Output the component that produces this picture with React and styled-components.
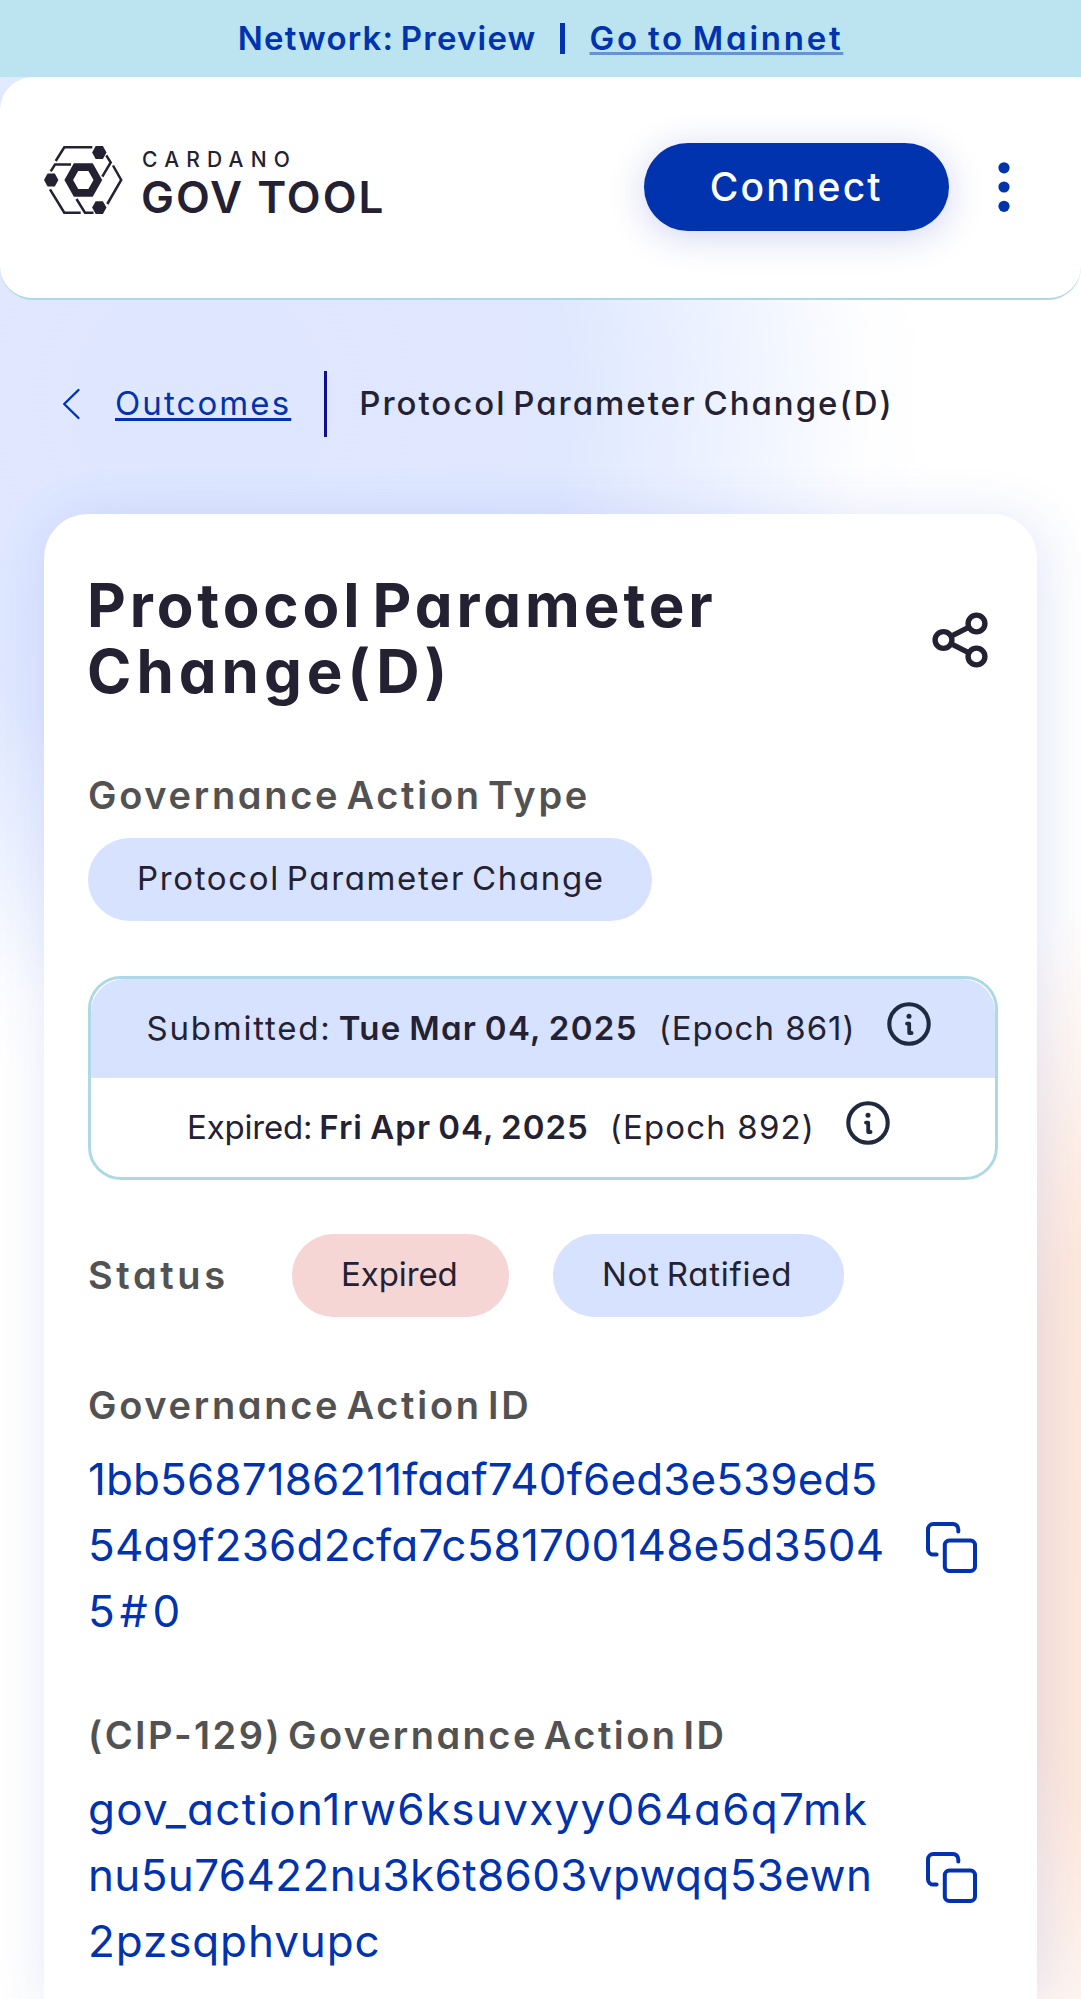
import React from "react";
import styled, { createGlobalStyle } from "styled-components";

const color = {
  primary: "#0033ad",
  ink: "#242232",
  label: "#525252",
  chip: "#d6e2ff",
  chipError: "#f6d5d5",
  border: "#add8e6",
};

const GlobalStyle = createGlobalStyle`
  *, *::before, *::after { box-sizing: border-box; }
  body {
    margin: 0;
    background: #fff;
    color: ${color.ink};
    font-family: Inter, "Open Sans", sans-serif;
    font-feature-settings: "cv11";
  }
`;

const Page = styled.div`
  display: flex;
  flex-direction: column;
  height: 1999px;
  overflow: hidden;
  background:
    radial-gradient(ellipse 300px 650px at 1160px 1530px, #ffe8db 0%, #ffe9dd 50%, rgba(255, 240, 230, 0.6) 78%, rgba(255, 255, 255, 0) 100%),
    radial-gradient(ellipse 740px 690px at 200px 400px, #dee7ff 0%, #dfe8ff 50%, rgba(232, 239, 255, 0.75) 72%, rgba(250, 251, 255, 0.4) 90%, rgba(255, 255, 255, 0) 100%),
    #fff;
`;

const Text = styled.span`
  white-space: pre;
  font-size: ${(p) => p.$size || 33}px;
  font-weight: ${(p) => p.$weight || 400};
  letter-spacing: ${(p) => p.$track || 0}px;
  word-spacing: ${(p) => p.$space || 0}px;
  line-height: 1.2;
`;

const Banner = styled.div`
  display: flex;
  flex: none;
  align-items: center;
  justify-content: center;
  height: 77px;
  background: #bbe4f0;
  color: ${color.primary};
`;

const BannerDivider = styled.span`
  width: 5px;
  height: 31px;
  margin: 0 25px 0 23px;
  background: ${color.primary};
`;

const MainnetLink = styled(Text)`
  text-decoration: underline;
  text-decoration-color: rgba(0, 51, 173, 0.45);
  text-decoration-thickness: 3px;
  text-underline-offset: 2px;
  text-decoration-skip-ink: none;
`;

const Header = styled.header`
  display: flex;
  flex: none;
  align-items: center;
  justify-content: space-between;
  height: 222.5px;
  padding: 0 71.5px 0 44px;
  background: #fff;
  border-bottom: 2.75px solid ${color.border};
  border-radius: 33px;
`;

const Logo = styled.div`
  display: flex;
  gap: 19px;
  height: 68px;
  margin-bottom: 14px;
`;

const LogoText = styled.div`
  display: flex;
  flex-direction: column;
`;

const LogoTop = styled(Text)`
  line-height: 28px;
`;

const LogoBottom = styled(Text)`
  line-height: 47px;
  margin-left: -1px;
`;

const Actions = styled.div`
  display: flex;
  align-items: center;
  gap: 48.5px;
`;

const ConnectButton = styled.button`
  width: 305.5px;
  height: 88px;
  padding: 0;
  border: 0;
  border-radius: 44px;
  background: ${color.primary};
  color: #fff;
  font-family: inherit;
  font-feature-settings: inherit;
  box-shadow: 0 6px 36px rgba(47, 62, 190, 0.22);
`;

const Icon = styled.svg`
  display: block;
  flex: none;
`;

const Breadcrumbs = styled.nav`
  display: flex;
  flex: none;
  align-items: center;
  height: 66.5px;
  margin: 71px 0 76.5px 61px;
`;

const BackLink = styled(Text)`
  margin-left: 34px;
  color: ${color.primary};
  text-decoration: underline;
  text-decoration-thickness: 2.75px;
  text-underline-offset: 2.5px;
  text-decoration-skip-ink: none;
`;

const CrumbDivider = styled.span`
  width: 3px;
  height: 66.5px;
  margin: 0 32px 0 33px;
  background: #10108f;
`;

const Card = styled.main`
  flex: 1;
  margin: 0 44.5px 0 44px;
  padding: 58px 38.5px 0 44px;
  background: #fff;
  border-radius: 44px 44px 0 0;
  box-shadow: 5.5px 5.5px 55px rgba(47, 72, 200, 0.14);
`;

const TitleRow = styled.div`
  display: flex;
  align-items: center;
  justify-content: space-between;
  padding-right: 10px;
`;

const Title = styled.h1`
  margin: 0 0 0 -1px;
`;

const TitleLine = styled(Text)`
  display: block;
  line-height: 66px;
`;

const Section = styled.section`
  margin-top: ${(p) => p.$top}px;
`;

const Label = styled(Text)`
  display: block;
  color: ${color.label};
  line-height: 38px;
`;

const Pill = styled.div`
  display: flex;
  align-items: center;
  width: ${(p) => p.$width}px;
  height: 82.5px;
  margin-top: ${(p) => p.$top || 0}px;
  padding-left: 49px;
  border-radius: 42px;
  background: ${(p) => (p.$error ? color.chipError : color.chip)};
`;

const Dates = styled.div`
  height: 204px;
  margin-top: 55px;
  border: 3px solid ${color.border};
  border-radius: 33px;
`;

const DateRow = styled.div`
  display: flex;
  align-items: center;
  justify-content: center;
  height: 99px;
  padding: 1px 9px 0 0;
  border-radius: 33px 33px 0 0;
  background: ${(p) => (p.$filled ? color.chip : "transparent")};
`;

const DateValue = styled(Text)`
  margin: 0 21px 0 7px;
`;

const InfoBox = styled.span`
  margin: 0 0 9px 31px;
`;

const StatusRow = styled.div`
  display: flex;
  align-items: center;
  gap: 44px;
  margin-top: 54.5px;
`;

const StatusLabel = styled(Label)`
  width: 160px;
`;

const IdRow = styled.div`
  display: flex;
  align-items: center;
  justify-content: space-between;
  margin-top: 22.5px;
  padding-right: 21px;
  color: ${color.primary};
`;

const IdLine = styled(Text)`
  display: block;
  line-height: 66px;
`;

const IconSlot = styled.div`
  padding-top: ${(p) => p.$drop}px;
`;

const hexagon = (cx, cy, r, h) =>
  `M${cx - r} ${cy}L${cx - r / 2} ${cy - h}H${cx + r / 2}L${cx + r} ${cy}L${cx + r / 2} ${cy + h}H${cx - r / 2}Z`;

function LogoMark() {
  return (
    <Icon width="79" height="68" viewBox="0 0 79 68" fill={color.ink}>
      <g fill="none" stroke={color.ink} strokeWidth="2.5">
        <path d="M11.7 15L20.3 1.3H48.3" />
        <path d="M62.3 9.4L66.7 16.5L58.3 30.7" />
        <path d="M69 19.5L77.2 34L63.3 58" />
        <path d="M6.7 25.3L11 18.5H27" />
        <path d="M6 43.3L20.3 66.7H36.7" />
        <path d="M32.5 53L41 66.7H49.5" />
      </g>
      <path d={hexagon(55.3, 6.5, 7.2, 6.4)} />
      <path d={hexagon(7.2, 34, 7.2, 6.4)} />
      <path d={hexagon(55.3, 61.6, 7.2, 6.4)} />
      <path fillRule="evenodd" d={hexagon(39.3, 34, 18.9, 16.8) + hexagon(39.3, 34, 10.2, 9)} />
    </Icon>
  );
}

function MenuIcon() {
  return (
    <Icon width="12" height="50" viewBox="0 0 12 50" fill={color.primary}>
      <circle cx="6" cy="5.8" r="5.6" />
      <circle cx="6" cy="25" r="5.6" />
      <circle cx="6" cy="44.3" r="5.6" />
    </Icon>
  );
}

function ChevronIcon() {
  return (
    <Icon width="20" height="32" viewBox="0 0 20 32" fill="none" stroke={color.primary} strokeWidth="2.4" strokeLinecap="round" strokeLinejoin="round">
      <path d="M17.5 2L3.2 16L17.5 30" />
    </Icon>
  );
}

function ShareIcon() {
  return (
    <Icon width="56" height="56" viewBox="0 0 56 56" fill="none" stroke={color.ink} strokeWidth="5.4">
      <circle cx="44.5" cy="11.5" r="8.4" />
      <circle cx="11.5" cy="28" r="8.4" />
      <circle cx="44.5" cy="44.5" r="8.4" />
      <path d="M19.3 24.2L37 15.2M19.3 31.8L37 40.8" />
    </Icon>
  );
}

function InfoIcon() {
  return (
    <Icon width="44" height="44" viewBox="0 0 44 44" fill="none" stroke="#1f2a3f" strokeWidth="4.1">
      <circle cx="22" cy="22" r="19.7" />
      <circle cx="22" cy="14.2" r="2.5" fill="#1f2a3f" stroke="none" />
      <path d="M20 21.6H22.2V31H24.6" strokeWidth="3.8" strokeLinecap="round" strokeLinejoin="round" />
    </Icon>
  );
}

function CopyIcon() {
  return (
    <Icon width="51" height="51" viewBox="0 0 51 51" fill="none" stroke={color.primary} strokeWidth="4" strokeLinecap="round">
      <rect x="18.8" y="18.5" width="30.2" height="30.4" rx="4.5" />
      <path d="M10.6 32.6H7.4A5.4 5.4 0 0 1 2 27.2V7.4A5.4 5.4 0 0 1 7.4 2H26.8A5.4 5.4 0 0 1 32.3 7.4V9.5" />
    </Icon>
  );
}

const dates = [
  { label: "Submitted:", labelTrack: 1.8, value: "Tue Mar 04, 2025", valueTrack: 1.3, epoch: "(Epoch 861)", epochTrack: 1, filled: true },
  { label: "Expired:", labelTrack: -0.2, value: "Fri Apr 04, 2025", valueTrack: 1, epoch: "(Epoch 892)", epochTrack: 1.15 },
];

const identifiers = [
  {
    title: "Governance Action ID",
    track: 2.7,
    top: 69,
    lines: [
      ["1bb5687186211faaf740f6ed3e539ed5", 0.1],
      ["54a9f236d2cfa7c581700148e5d3504", 0.2],
      ["5#0", 5],
    ],
  },
  {
    title: "(CIP-129) Governance Action ID",
    track: 2.45,
    top: 71.5,
    lines: [
      ["gov_action1rw6ksuvxyy064a6q7mk", 1.3],
      ["nu5u76422nu3k6t8603vpwqq53ewn", 0.37],
      ["2pzsqphvupc", 0.9],
    ],
  },
];

export default function App() {
  return (
    <>
      <GlobalStyle />
      <Page>
        <Banner>
          <Text $weight={600} $track={1.2} $space={-3}>Network: Preview</Text>
          <BannerDivider />
          <MainnetLink as="a" $weight={600} $track={2.75} $space={-3}>Go to Mainnet</MainnetLink>
        </Banner>
        <Header>
          <Logo>
            <LogoMark />
            <LogoText>
              <LogoTop $size={21} $weight={500} $track={7.2}>CARDANO</LogoTop>
              <LogoBottom $size={44} $weight={600} $track={2}>GOV TOOL</LogoBottom>
            </LogoText>
          </Logo>
          <Actions>
            <ConnectButton>
              <Text $size={39} $weight={500} $track={2.2}>Connect</Text>
            </ConnectButton>
            <MenuIcon />
          </Actions>
        </Header>
        <Breadcrumbs>
          <ChevronIcon />
          <BackLink as="a" $track={2.1}>Outcomes</BackLink>
          <CrumbDivider />
          <Text $weight={500} $track={1.98} $space={-4}>Protocol Parameter Change(D)</Text>
        </Breadcrumbs>
        <Card>
          <TitleRow>
            <Title>
              <TitleLine $size={60} $weight={650} $track={3.9} $space={-9}>Protocol Parameter</TitleLine>
              <TitleLine $size={60} $weight={650} $track={5}>Change(D)</TitleLine>
            </Title>
            <IconSlot $drop={5}><ShareIcon /></IconSlot>
          </TitleRow>
          <Section $top={72.5}>
            <Label $size={38} $weight={600} $track={2.7} $space={-6}>Governance Action Type</Label>
            <Pill $width={563.5} $top={24}>
              <Text $track={1.65} $space={-4}>Protocol Parameter Change</Text>
            </Pill>
          </Section>
          <Dates>
            {dates.map((d) => (
              <DateRow key={d.label} $filled={d.filled}>
                <Text $track={d.labelTrack}>{d.label}</Text>
                <DateValue $weight={600} $track={d.valueTrack} $space={-2}>{d.value}</DateValue>
                <Text $track={d.epochTrack}>{d.epoch}</Text>
                <InfoBox><InfoIcon /></InfoBox>
              </DateRow>
            ))}
          </Dates>
          <StatusRow>
            <StatusLabel $size={38} $weight={600} $track={3.6}>Status</StatusLabel>
            <Pill $width={217} $error>
              <Text $track={-0.1}>Expired</Text>
            </Pill>
            <Pill $width={291}>
              <Text $track={0.75} $space={-3}>Not Ratified</Text>
            </Pill>
          </StatusRow>
          {identifiers.map((id) => (
            <Section key={id.title} $top={id.top}>
              <Label $size={38} $weight={600} $track={id.track} $space={-6}>{id.title}</Label>
              <IdRow>
                <div>
                  {id.lines.map(([text, track]) => (
                    <IdLine key={text} $size={44} $track={track}>{text}</IdLine>
                  ))}
                </div>
                <IconSlot $drop={4}><CopyIcon /></IconSlot>
              </IdRow>
            </Section>
          ))}
        </Card>
      </Page>
    </>
  );
}
